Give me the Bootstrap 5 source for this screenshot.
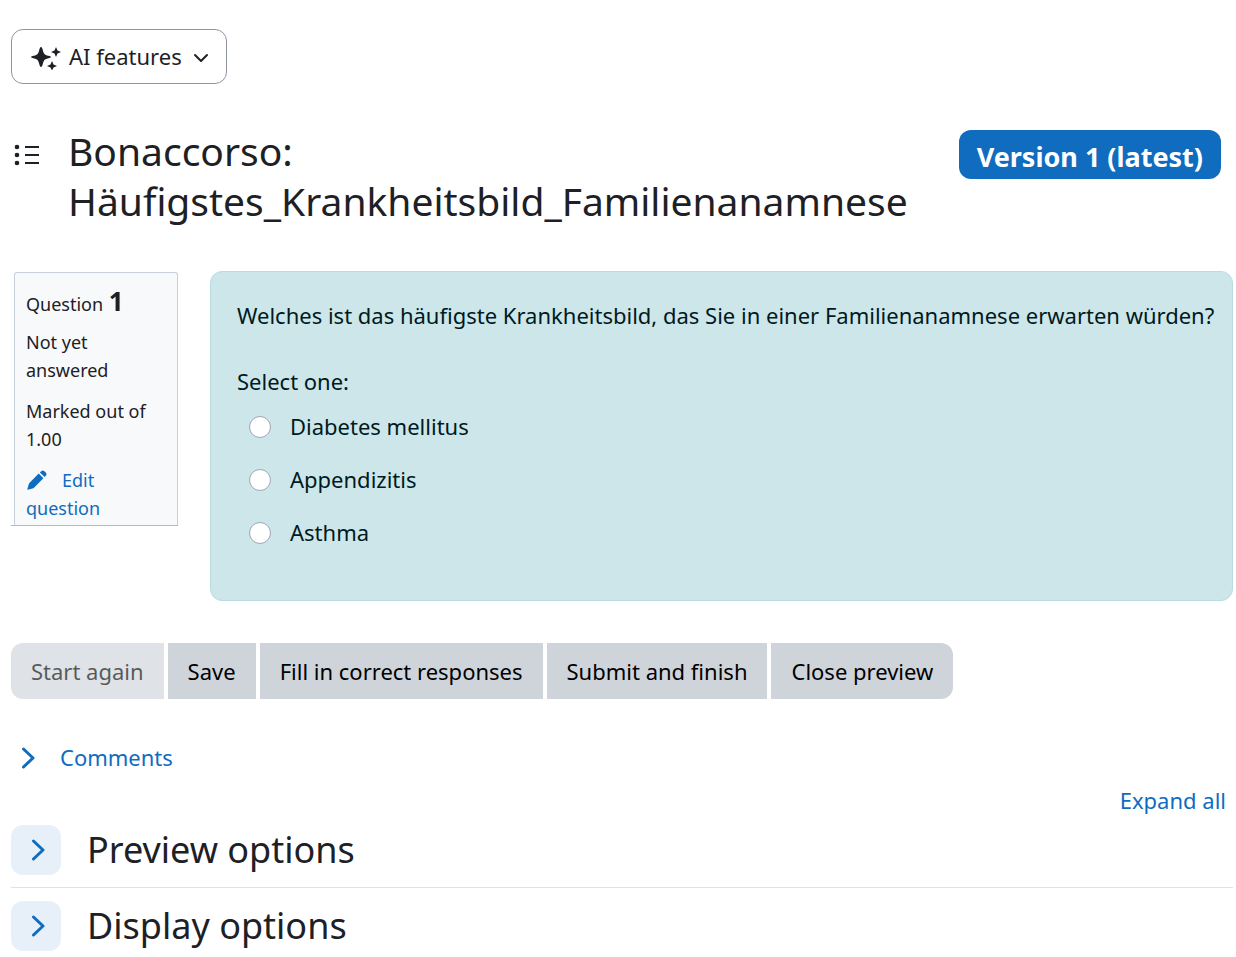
<!DOCTYPE html>
<html lang="en">
<head>
<meta charset="utf-8">
<meta name="viewport" content="width=device-width, initial-scale=1">
<title>Question preview</title>
<link href="https://cdn.jsdelivr.net/npm/bootstrap@5.3.0/dist/css/bootstrap.min.css" rel="stylesheet">
<style>
:root { --brand: #0f6cbf; --ink: #1d2125; }
body { font-family: "Noto Sans", "Liberation Sans", sans-serif; font-size: 22px; line-height: 37px; color: var(--ink); background: #fff; }
.page { padding: 29px 3px 0 11px; }
a { color: var(--brand); text-decoration: none; }
a:hover { text-decoration: underline; }
svg { flex: none; }
.ai-btn { height: 55px; padding: 0 17px 0 19px; border: 1px solid #8f959e; border-radius: 12px; font-size: 22px; color: var(--ink); gap: 7px; }
.title-row { margin-top: 42px; gap: 29px; }
.title-row h1 { font-size: 39px; line-height: 50px; font-weight: 400; min-width: 0; }
.index-icon { margin-top: 18px; margin-left: 2px; }
.version { margin: 4px 12px 0 auto; height: 49px; line-height: 49px; padding: 2px 18px 0; font-size: 27px; font-weight: 700; background: var(--brand); border-radius: 12px; white-space: nowrap; }
.question { margin-top: 45px; gap: 32px; }
.info-wrap { flex: none; width: 167px; margin-top: 1px; padding: 0 0 0 3px; border-bottom: 1px solid #b4bac0; }
.info { background: #f8f9fa; border: 1px solid #cad0d7; border-bottom: 0; border-radius: 3px 3px 0 0; padding: 11px 11px 3px; font-size: 18px; line-height: 28px; }
.info h2 { font-size: 18px; line-height: 34px; font-weight: 400; margin-bottom: 7px; }
.info h2 b { font-size: 26px; line-height: 34px; margin-left: 1px; }
.info div { margin-bottom: 13px; }
.edit-icon { margin: 0 15px 4px 1px; }
.formulation { background: #cde6ea; border: 1px solid #b8dce2; border-radius: 12px; color: #001a1e; padding: 25px 12px 49px 26px; min-height: 330px; }
.formulation p { margin-bottom: 29px; }
.formulation legend { font-size: 22px; line-height: 37px; margin: 0 0 8px; }
.answers { padding-left: 12px; gap: 16px; }
.answers .form-check-input { width: 22px; height: 22px; margin: 0 19px 0 0; border: 1px solid #9ea6b5; }
.controls { margin-top: 42px; gap: 4px; }
.controls .btn { --bs-btn-bg: #ced4da; --bs-btn-color: #000; --bs-btn-disabled-bg: #ced4da; --bs-btn-disabled-color: #000; --bs-btn-disabled-opacity: .65; height: 56px; font-size: 22px; border: 0; border-radius: 0; padding: 0 20px; }
.controls .btn:hover { background: #bcc3ca; }
.controls .btn:first-child { border-radius: 12px 0 0 12px; }
.controls .btn:last-child { border-radius: 0 12px 12px 0; }
.comments { margin-top: 40px; padding-left: 10px; }
.comments a { gap: 25px; }
.expand { margin: 6px 7px 6px 0; }
.section { padding-bottom: 12px; border-bottom: 1px solid #dee2e6; margin-bottom: 13px; gap: 26px; }
.section:last-child { border: 0; margin: 0; padding-bottom: 6px; }
.section h2 { font-size: 36px; line-height: 50px; font-weight: 400; }
.toggle { width: 50px; height: 50px; border-radius: 12px; background: #e7f0f9; color: var(--brand); padding: 0 0 0 3px; }
</style>
</head>
<body>
<main class="page">
  <button type="button" class="btn ai-btn d-inline-flex align-items-center">
    <svg width="31" height="26" viewBox="0 0 31 26" fill="currentColor" aria-hidden="true"><path d="M10 3Q11 3 11.500 5 12.500 9.500 14 10.500 15.500 11.500 18.500 12 20 12.300 20 13T18.500 14Q15.500 14.500 14 15.500 12.500 16.500 11.500 21 11 23 10 23T8.500 21Q7.500 16.500 6 15.500 4.500 14.500 1.500 14 0 13.700 0 13T1.500 12Q4.500 11.500 6 10.500 7.500 9.500 8.500 5 9 3 10 3ZM25 3 26.500 6.500 30 8 26.500 9.500 25 13 23.500 9.500 20 8 23.500 6.500ZM21 17 22.500 20.500 26 22 22.500 23.500 21 26.500 19.500 23.500 16 22 19.500 20.500Z"/></svg>
    <span>AI features</span>
    <svg class="ms-1" width="16" height="12" viewBox="0 0 16 12" fill="none" stroke="currentColor" stroke-width="2" stroke-linecap="round" stroke-linejoin="round" aria-hidden="true"><path d="M2 4 8 10 14 4"/></svg>
  </button>

  <header class="title-row d-flex align-items-start">
    <svg class="index-icon" width="26" height="22" viewBox="0 0 26 22" aria-hidden="true"><g fill="currentColor"><circle cx="4" cy="3" r="2.300"/><circle cx="4" cy="11" r="2.300"/><circle cx="4" cy="19" r="2.300"/></g><path d="M12 3H26M12 11H26M12 19H26" stroke="currentColor" stroke-width="2"/></svg>
    <h1 class="mb-0 text-break">Bonaccorso: Häufigstes_Krankheitsbild_Familienanamnese</h1>
    <span class="version text-white">Version 1 (latest)</span>
  </header>

  <section class="question d-flex align-items-start">
    <aside class="info-wrap">
      <div class="info mb-0">
        <h2>Question <b>1</b></h2>
        <div>Not yet answered</div>
        <div>Marked out of 1.00</div>
        <a href="#"><svg class="edit-icon" width="20" height="20" viewBox="0 0 20 20" fill="currentColor" aria-hidden="true"><path d="M11.700 3.600 16.400 8.300 7 17.700Q6.300 18.300 5.500 18.500L.8 19.700Q.2 19.700.4 19L1.700 14.500Q1.900 13.700 2.400 13.100ZM12.900 2.400 14.500.9Q16-.1 17.400 1.200L18.800 2.600Q20 4 19 5.500L17.600 7.100Z"/></svg>Edit question</a>
      </div>
    </aside>
    <form class="formulation flex-grow-1">
      <p>Welches ist das häufigste Krankheitsbild, das Sie in einer Familienanamnese erwarten würden?</p>
      <fieldset>
        <legend>Select one:</legend>
        <div class="answers d-flex flex-column">
          <div class="d-flex align-items-center"><input class="form-check-input" type="radio" name="answer" id="a0"><label for="a0">Diabetes mellitus</label></div>
          <div class="d-flex align-items-center"><input class="form-check-input" type="radio" name="answer" id="a1"><label for="a1">Appendizitis</label></div>
          <div class="d-flex align-items-center"><input class="form-check-input" type="radio" name="answer" id="a2"><label for="a2">Asthma</label></div>
        </div>
      </fieldset>
    </form>
  </section>

  <div class="controls d-flex flex-wrap">
    <button type="button" class="btn" disabled>Start again</button>
    <button type="button" class="btn">Save</button>
    <button type="button" class="btn">Fill in correct responses</button>
    <button type="button" class="btn">Submit and finish</button>
    <button type="button" class="btn">Close preview</button>
  </div>

  <div class="comments d-flex">
    <a class="d-inline-flex align-items-center" href="#"><svg width="14" height="24" viewBox="0 0 14 24" fill="none" stroke="currentColor" stroke-width="3" stroke-linecap="round" stroke-linejoin="round" aria-hidden="true"><path d="M2.500 3 12 12 2.500 21"/></svg>Comments</a>
  </div>
  <div class="expand text-end"><a href="#">Expand all</a></div>

  <div>
    <section class="section d-flex align-items-center">
      <button type="button" class="btn toggle d-flex align-items-center justify-content-center" aria-label="Preview options"><svg width="14" height="24" viewBox="0 0 14 24" fill="none" stroke="currentColor" stroke-width="3" stroke-linecap="round" stroke-linejoin="round" aria-hidden="true"><path d="M2.500 3 12 12 2.500 21"/></svg></button>
      <h2 class="mb-0">Preview options</h2>
    </section>
    <section class="section d-flex align-items-center">
      <button type="button" class="btn toggle d-flex align-items-center justify-content-center" aria-label="Display options"><svg width="14" height="24" viewBox="0 0 14 24" fill="none" stroke="currentColor" stroke-width="3" stroke-linecap="round" stroke-linejoin="round" aria-hidden="true"><path d="M2.500 3 12 12 2.500 21"/></svg></button>
      <h2 class="mb-0">Display options</h2>
    </section>
  </div>
</main>
<script src="https://cdn.jsdelivr.net/npm/bootstrap@5.3.0/dist/js/bootstrap.bundle.min.js"></script>
</body>
</html>
